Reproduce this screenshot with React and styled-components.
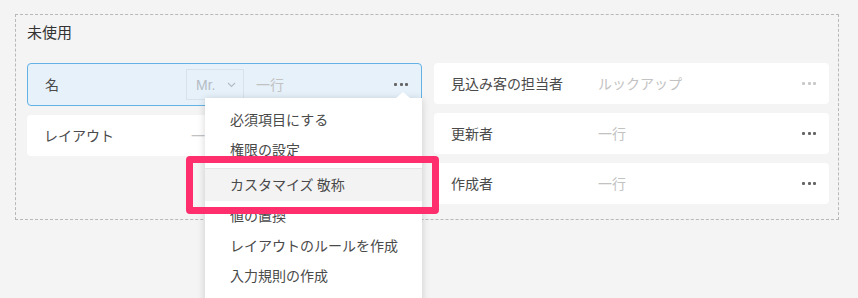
import styled, { createGlobalStyle } from "styled-components";

const GlobalStyle = createGlobalStyle`
  body {
    margin: 0;
    background: #f4f4f4;
    font-family: "Noto Sans CJK JP", "Noto Sans", sans-serif;
  }
`;

const Page = styled.div`
  position: relative;
  height: 298px;
  overflow: hidden;
  padding: 14px 0 0 15px;
  box-sizing: border-box;
`;

const Section = styled.div`
  width: 824px;
  box-sizing: border-box;
  border: 1px dashed #b8b8b8;
  padding: 7px 11px 15px;
`;

const Title = styled.h2`
  margin: 0 0 21px;
  font-size: 15px;
  font-weight: 400;
  line-height: 20px;
  color: #333;
`;

const Columns = styled.div`
  display: grid;
  grid-template-columns: 395px 395px;
  column-gap: 12px;
  align-items: start;
`;

const Column = styled.div`
  display: flex;
  flex-direction: column;
  gap: 9px;
`;

const Row = styled.div`
  position: relative;
  display: flex;
  align-items: center;
  height: ${(p) => (p.$active ? "43px" : "41px")};
  box-sizing: border-box;
  padding: 0 13px 2px 17px;
  border-radius: 4px;
  background: ${(p) => (p.$active ? "#e6f1fa" : "#fff")};
  border: ${(p) => (p.$active ? "1px solid #62b2e6" : "none")};
`;

const Label = styled.span`
  width: 147px;
  flex-shrink: 0;
  font-size: 14px;
  color: #4a4a4a;
`;

const Value = styled.span`
  flex: 1;
  font-size: 14px;
  color: #c2c2c2;
`;

const Select = styled.div`
  display: flex;
  align-items: center;
  justify-content: space-between;
  width: 58px;
  height: 31px;
  box-sizing: border-box;
  margin: 2px 12px 0 -6px;
  padding: 0 7px 0 9px;
  border: 1px solid #d7e3ec;
  font-family: "Liberation Sans", Arial, sans-serif;
  font-size: 14px;
  color: #b4bcc4;
`;

const Dots = styled.div`
  display: flex;
  gap: 2.5px;
  margin-top: 2px;
  span {
    width: 3px;
    height: 3px;
    border-radius: 1px;
    background: ${(p) => (p.$light ? "#c9c9c9" : "#666")};
  }
`;

const Menu = styled.div`
  position: absolute;
  top: 34px;
  right: -1px;
  width: 217px;
  height: 230px;
  padding-top: 7px;
  box-sizing: border-box;
  background: #fff;
  box-shadow: 0 1px 8px rgba(0, 0, 0, 0.16);
  z-index: 2;
  &::before {
    content: "";
    position: absolute;
    top: -6px;
    right: 12px;
    border-left: 7px solid transparent;
    border-right: 7px solid transparent;
    border-bottom: 6px solid #fff;
  }
`;

const MenuItem = styled.div`
  height: ${(p) => (p.$hover ? "32px" : "30px")};
  box-sizing: border-box;
  display: flex;
  align-items: center;
  padding: 0 0 2px 25px;
  font-size: 14px;
  color: #4a4a4a;
  background: ${(p) => (p.$hover ? "#f3f3f3" : "transparent")};
`;

const Divider = styled.div`
  height: 1px;
  margin: 3px 0 0;
  background: #e6e6e6;
`;

const Highlight = styled.div`
  position: absolute;
  left: 186px;
  top: 156px;
  width: 253px;
  height: 58px;
  box-sizing: border-box;
  border: 7px solid #ff2e6d;
  border-radius: 4px;
  z-index: 3;
`;

function More({ light }) {
  return (
    <Dots $light={light}>
      <span />
      <span />
      <span />
    </Dots>
  );
}

export default function App() {
  return (
    <>
      <GlobalStyle />
      <Page>
        <Section>
          <Title>未使用</Title>
          <Columns>
            <Column>
              <Row $active>
                <Label>名</Label>
                <Select>
                  Mr.
                  <svg width="9" height="6" viewBox="0 0 9 6" fill="none">
                    <path d="M1 1l3.5 3.5L8 1" stroke="#b4bcc4" strokeWidth="1.2" />
                  </svg>
                </Select>
                <Value>一行</Value>
                <More />
                <Menu>
                  <MenuItem>必須項目にする</MenuItem>
                  <MenuItem>権限の設定</MenuItem>
                  <Divider />
                  <MenuItem $hover>カスタマイズ 敬称</MenuItem>
                  <MenuItem>値の置換</MenuItem>
                  <MenuItem>レイアウトのルールを作成</MenuItem>
                  <MenuItem>入力規則の作成</MenuItem>
                </Menu>
              </Row>
              <Row>
                <Label>レイアウト</Label>
                <Value>一行</Value>
                <More />
              </Row>
            </Column>
            <Column>
              <Row>
                <Label>見込み客の担当者</Label>
                <Value>ルックアップ</Value>
                <More light />
              </Row>
              <Row>
                <Label>更新者</Label>
                <Value>一行</Value>
                <More />
              </Row>
              <Row>
                <Label>作成者</Label>
                <Value>一行</Value>
                <More />
              </Row>
            </Column>
          </Columns>
        </Section>
        <Highlight />
      </Page>
    </>
  );
}
